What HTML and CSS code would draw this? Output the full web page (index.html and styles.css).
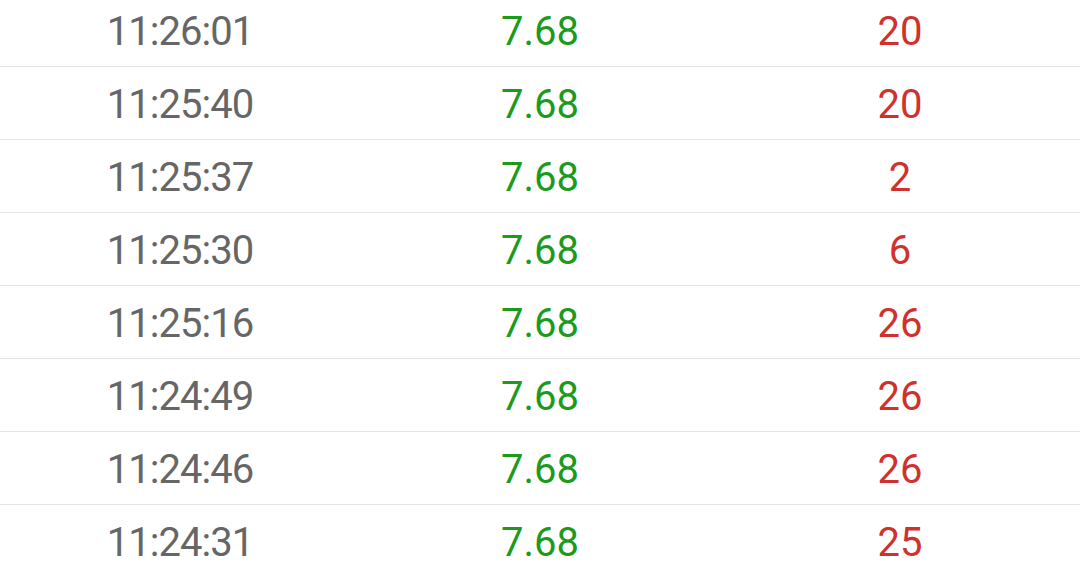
FILE: index.html
```html
<!DOCTYPE html>
<html>
<head>
<meta charset="utf-8">
<link rel="stylesheet" href="styles.css">
</head>
<body>
<div class="list">
  <div class="row"><span class="time">11:26:01</span><span class="price">7.68</span><span class="vol">20</span></div>
  <div class="row"><span class="time">11:25:40</span><span class="price">7.68</span><span class="vol">20</span></div>
  <div class="row"><span class="time">11:25:37</span><span class="price">7.68</span><span class="vol">2</span></div>
  <div class="row"><span class="time">11:25:30</span><span class="price">7.68</span><span class="vol">6</span></div>
  <div class="row"><span class="time">11:25:16</span><span class="price">7.68</span><span class="vol">26</span></div>
  <div class="row"><span class="time">11:24:49</span><span class="price">7.68</span><span class="vol">26</span></div>
  <div class="row"><span class="time">11:24:46</span><span class="price">7.68</span><span class="vol">26</span></div>
  <div class="row"><span class="time">11:24:31</span><span class="price">7.68</span><span class="vol">25</span></div>
</div>
</body>
</html>
```
FILE: styles.css
```css
html, body {
  margin: 0;
  padding: 0;
  background: #ffffff;
  overflow: hidden;
}
.list {
  margin-top: -6px;
  font-family: Roboto, "Noto Sans", sans-serif;
  font-size: 40px;
}
.row {
  display: grid;
  grid-template-columns: 1fr 1fr 1fr;
  height: 72px;
  align-items: center;
  border-bottom: 1px solid #e4e4e4;
}
.row span {
  text-align: center;
  line-height: 1;
  padding-top: 4px;
}
.time { color: #666666; letter-spacing: -1px; }
.price { color: #1c9a1c; }
.vol { color: #d0312d; }
```
